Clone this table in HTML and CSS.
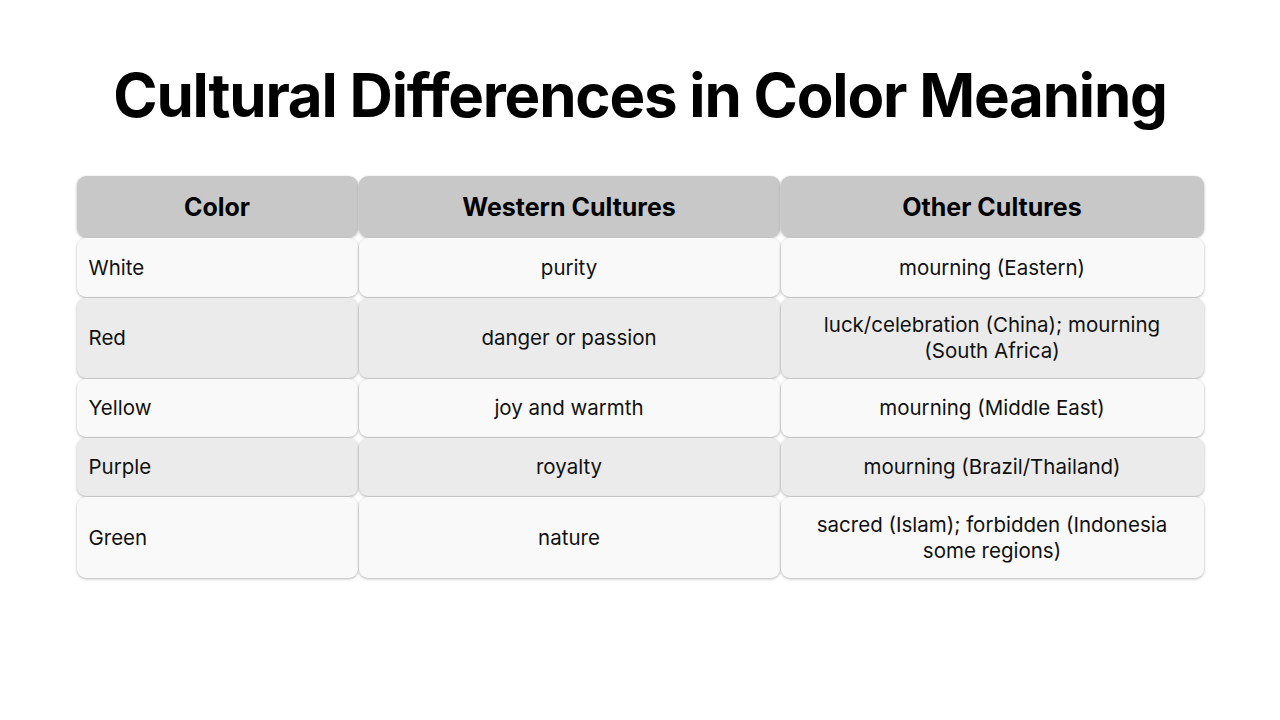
FILE: index.html
```html
<!DOCTYPE html>
<html>
<head>
<meta charset="utf-8">
<link rel="stylesheet" href="styles.css">
</head>
<body>
<div class="slide">
  <h1 class="title">Cultural Differences in Color Meaning</h1>
  <div class="table">
    <div class="cell head">Color</div>
    <div class="cell head">Western Cultures</div>
    <div class="cell head">Other Cultures</div>

    <div class="cell odd first">White</div>
    <div class="cell odd">purity</div>
    <div class="cell odd">mourning (Eastern)</div>

    <div class="cell even first">Red</div>
    <div class="cell even">danger or passion</div>
    <div class="cell even">luck/celebration (China); mourning<br>(South Africa)</div>

    <div class="cell odd first">Yellow</div>
    <div class="cell odd">joy and warmth</div>
    <div class="cell odd">mourning (Middle East)</div>

    <div class="cell even first">Purple</div>
    <div class="cell even">royalty</div>
    <div class="cell even">mourning (Brazil/Thailand)</div>

    <div class="cell odd first">Green</div>
    <div class="cell odd">nature</div>
    <div class="cell odd">sacred (Islam); forbidden (Indonesia<br>some regions)</div>
  </div>
</div>
</body>
</html>
```
FILE: styles.css
```css
html, body {
  margin: 0;
  padding: 0;
  background: #ffffff;
}
body {
  font-family: Inter, "Liberation Sans", sans-serif;
  color: #000;
}
.slide {
  width: 1280px;
  height: 720px;
  box-sizing: border-box;
  padding-top: 58px;
  display: flex;
  flex-direction: column;
  align-items: center;
}
.title {
  margin: 0;
  font-size: 60px;
  font-weight: 700;
  letter-spacing: -1.2px;
  line-height: 74px;
  height: 74px;
}
.table {
  margin-top: 44px;
  width: 1127px;
  display: grid;
  grid-template-columns: 281px 421px 423px;
  grid-template-rows: 61px 59px 80px 58px 58px 81px;
  gap: 1px;
}
.cell {
  border-radius: 9px;
  box-shadow: 0 1px 3px rgba(0,0,0,0.3);
  display: flex;
  align-items: center;
  justify-content: center;
  text-align: center;
  font-size: 20.5px;
  line-height: 26px;
  letter-spacing: 0;
  padding: 0 12px;
  color: #111;
}
.head {
  background: #c8c8c8;
  font-weight: 700;
  font-size: 25px;
  letter-spacing: 0;
  color: #000;
}
.odd { background: #f9f9f9; }
.even { background: #ebebeb; }
.first {
  justify-content: flex-start;
  text-align: left;
}
```
